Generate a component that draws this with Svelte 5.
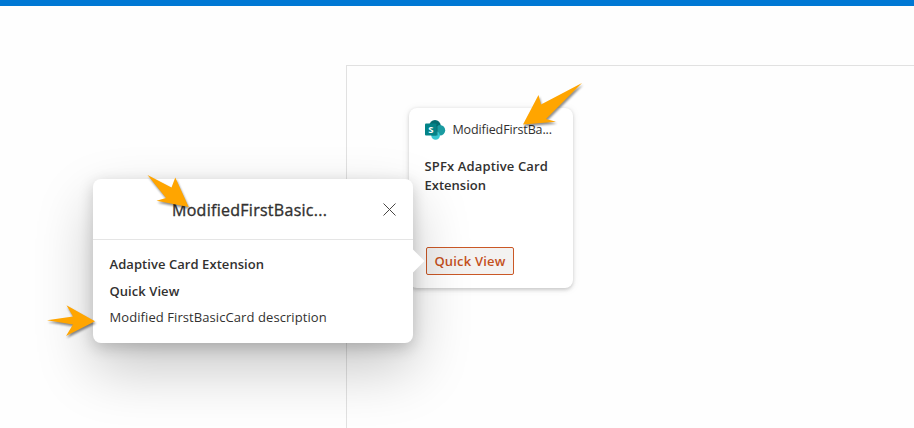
<script>
  const arrows = [
    '523,124.5 538.5,95 541,104.5 582,83 546,119 556,121.7',
    '147.5,175 171.5,187.5 175.3,177.5 188.7,207 156.5,200.7 166,198',
    '47,320.3 73,316.5 66.5,305.3 95,321.3 66,336 73,324.5'
  ];
</script>

<div class="page">
  <header class="bar"></header>
  <main class="canvas">
    <article class="card">
      <div class="card-head">
        <svg class="logo" width="21" height="20" viewBox="0 0 21 20">
          <circle cx="10" cy="5.8" r="5.8" fill="#036c70" />
          <circle cx="15" cy="10.3" r="5.2" fill="#1a9ba1" />
          <circle cx="10.6" cy="15.5" r="4.3" fill="#37c6d0" />
          <path d="M5 5h7.5v10.5H6.5z" fill="#035558" opacity=".6" />
          <rect x="0" y="3.5" width="11.5" height="12" rx="1" fill="#038387" />
          <text x="5.8" y="13.1" text-anchor="middle" font-size="9.5" font-weight="700" fill="#fff">S</text>
        </svg>
        <span class="name">ModifiedFirstBa...</span>
      </div>
      <h2><span class="h-one">SPFx Adaptive Card</span><br /><span class="h-two">Extension</span></h2>
      <button class="quick">Quick View</button>
    </article>
  </main>

  <section class="callout">
    <div class="callout-head">
      <span class="title">ModifiedFirstBasic...</span>
      <button class="close" aria-label="Close">
        <svg width="13" height="13" viewBox="0 0 13 13"><path d="M.5 .5l12 12M12.5 .5l-12 12" stroke="#484644" stroke-width="1" /></svg>
      </button>
    </div>
    <div class="callout-body">
      <strong class="b1">Adaptive Card Extension</strong>
      <strong class="b2">Quick View</strong>
      <span class="b3">Modified FirstBasicCard description</span>
    </div>
    <svg class="beak" width="12" height="24" viewBox="0 0 12 24"><path d="M0 .5L11.5 12L0 23.5z" fill="#fff" /></svg>
  </section>

  <svg class="marks" width="914" height="428" viewBox="0 0 914 428">
    {#each arrows as points}
      <polygon {points} fill="#ffa500" />
    {/each}
  </svg>
</div>

<style>
  :global(body) { margin: 0; background: #fff; }
  .page {
    position: relative;
    width: 914px;
    height: 428px;
    overflow: hidden;
    background: #fefefe;
    color: #323130;
    font-family: "Open Sans", "Noto Sans", sans-serif;
    display: flex;
    flex-direction: column;
  }
  .bar { height: 6px; background: #0078d4; flex: none; }
  .canvas {
    box-sizing: border-box;
    flex: 1;
    margin: 59px 0 0 346px;
    padding: 42px 0 0 62px;
    border-top: 1px solid #e1e1e1;
    border-left: 1px solid #e1e1e1;
  }
  .card {
    box-sizing: border-box;
    width: 164px;
    height: 180px;
    padding: 12px 16px 13px;
    background: #fff;
    border-radius: 8px;
    box-shadow: 0 1.6px 3.6px rgba(0, 0, 0, .16), 0 1px 8px rgba(0, 0, 0, .08);
    display: flex;
    flex-direction: column;
  }
  .card-head { display: flex; align-items: center; height: 20px; gap: 6.5px; white-space: nowrap; }
  .logo { flex: none; }
  .name { font-size: 12.5px; line-height: 20px; letter-spacing: -.12px; }
  h2 { margin: 17px 0 0 -.5px; font-size: 13px; line-height: 19px; font-weight: 600; white-space: nowrap; letter-spacing: .14px; }
  .h-two { letter-spacing: 0; }
  button { font-family: inherit; padding: 0; }
  .quick {
    box-sizing: border-box;
    width: 88px;
    height: 28px;
    margin: auto 0 0 1px;
    border: 1px solid #ca5826;
    border-radius: 2px;
    background: #f3f2f1;
    color: #c4501c;
    font-size: 13px;
    font-weight: 600;
    letter-spacing: .2px;
    white-space: nowrap;
  }
  .callout {
    position: absolute;
    left: 93px;
    top: 179px;
    width: 320px;
    height: 164px;
    border-radius: 8px;
    background: #fff;
    box-shadow: 0 25.6px 57.6px rgba(0, 0, 0, .22), 0 4.8px 14.4px rgba(0, 0, 0, .18);
  }
  .callout-head {
    box-sizing: border-box;
    height: 61px;
    padding: 0 17px 0 79px;
    border-bottom: 1px solid #e5e5e5;
    display: flex;
    align-items: center;
    justify-content: space-between;
  }
  .title { padding-top: 1px; font-size: 16px; letter-spacing: .28px; -webkit-text-stroke: .35px #323130; white-space: nowrap; }
  .close { border: 0; background: none; display: flex; width: 13px; height: 13px; }
  .callout-body { padding: 11px 16.5px; display: flex; flex-direction: column; align-items: flex-start; white-space: nowrap; font-size: 13px; }
  .callout-body > * { line-height: 27px; }
  strong { font-weight: 600; letter-spacing: .06px; }
  .callout-body .b3 { line-height: 25px; letter-spacing: .08px; }
  .beak { position: absolute; left: 320px; top: 70px; }
  .marks { position: absolute; inset: 0; pointer-events: none; filter: drop-shadow(1px 2px 1px rgba(0, 0, 0, .45)); }
</style>
